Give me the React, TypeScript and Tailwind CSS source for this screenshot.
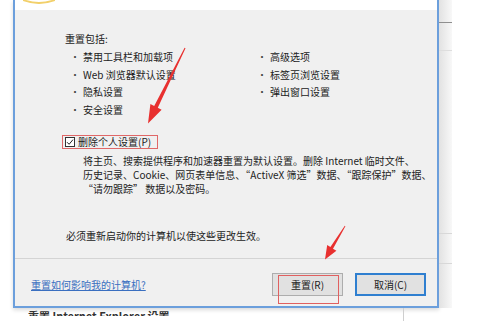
import React from "react";

const leftItems = ["禁用工具栏和加载项", "Web 浏览器默认设置", "隐私设置", "安全设置"];
const rightItems = ["高级选项", "标签页浏览设置", "弹出窗口设置"];

function Bullets({ items }: { items: string[] }) {
  return (
    <div className="flex flex-col">
      {items.map((t) => (
        <div key={t} className="flex h-[17.5px] items-center whitespace-nowrap">
          <span className="w-[13px] text-[#444]">•</span>
          <span>{t}</span>
        </div>
      ))}
    </div>
  );
}

function Checkbox() {
  return (
    <span className="flex h-[10px] w-[10px] items-center justify-center border border-[#333] bg-white">
      <svg width="8" height="8" viewBox="0 0 8 8">
        <path d="M1 4.2 L3.1 6.3 L7 1.6" fill="none" stroke="#222" strokeWidth="1" />
      </svg>
    </span>
  );
}

function Dialog() {
  return (
    <div className="flex h-[308px] w-[426px] shrink-0 flex-col border-x-2 border-b-2 border-[#6c9fdc] bg-[#f0f0f0] shadow-[0_2px_4px_rgba(0,0,0,0.15)]">
      <div className="h-[10px] bg-white pl-[8px]">
        <svg width="32" height="4" viewBox="0 0 32 4">
          <path d="M0 0 Q16 6 32 0" fill="none" stroke="#f2d06a" strokeWidth="2" />
        </svg>
      </div>

      <div className="mt-[22px] pl-[50px] leading-[14px]">重置包括:</div>

      <div className="mt-[2px] flex pl-[55px]">
        <div className="w-[187px]">
          <Bullets items={leftItems} />
        </div>
        <Bullets items={rightItems} />
      </div>

      <div className="ml-[47px] mt-[17px] flex h-[14px] w-fit items-center border border-[#e06868] pl-[2px] pr-[6px]">
        <Checkbox />
        <span className="ml-[3px] leading-[12px]">删除个人设置(P)</span>
      </div>

      <div className="mt-[5px] whitespace-nowrap pl-[68px] leading-[14px]">
        将主页、搜索提供程序和加速器重置为默认设置。删除 Internet 临时文件、
        <br />
        历史记录、Cookie、网页表单信息、“ActiveX 筛选”数据、“跟踪保护”数据、
        <br />
        “请勿跟踪” 数据以及密码。
      </div>

      <div className="mt-[33px] pl-[51px] leading-[14px]">必须重新启动你的计算机以使这些更改生效。</div>

      <div className="mt-auto flex h-[48px] items-start border-t border-[#d4d4d4] pl-[16px] pr-[11px] pt-[14px]">
        <span className="mt-[5px] leading-[14px] text-[#3a6fc0] underline">重置如何影响我的计算机?</span>
        <div className="ml-auto flex gap-[12px]">
          <button className="flex h-[23px] w-[71px] items-center justify-center border border-[#adadad] bg-[#e1e1e1] text-[10px]">
            重置(R)
          </button>
          <button className="flex h-[23px] w-[71px] items-center justify-center border-2 border-[#2f7fd0] bg-[#e1e1e1] text-[10px]">
            取消(C)
          </button>
        </div>
      </div>
    </div>
  );
}

function RightStrip() {
  return (
    <div className="flex h-[308px] w-[13px] shrink-0 flex-col bg-gradient-to-r from-[#e2e2e2] to-[#f8f8f8]">
      <div className="mt-[22px] h-px bg-[#8f8f8f]" />
      <div className="mt-[27px] h-px bg-[#dedede]" />
      <div className="mt-[182px] h-px bg-[#d8d8d8]" />
      <div className="mt-[29px] h-px bg-[#d8d8d8]" />
    </div>
  );
}

function BottomStrip() {
  return (
    <div className="flex h-[13px]">
      <div className="ml-[28px] mt-[1px] h-[7px] w-[375px] overflow-hidden">
        <div className="text-[11px] font-bold leading-[14px] text-[#333]">重置 Internet Explorer 设置</div>
      </div>
      <div className="h-full w-px bg-[#cfcfcf]" />
    </div>
  );
}

function Annotations() {
  return (
    <svg className="pointer-events-none absolute inset-0" width="503" height="321" viewBox="0 0 503 321">
      <rect x="278.5" y="275.5" width="60" height="28" fill="none" stroke="#e06060" strokeWidth="1" />
      <polygon
        points="185.5,48.2 157.8,107.8 161.6,109.8 148,123.5 150.4,104 154.2,106 184.6,47.8"
        fill="#e8302f"
      />
      <polygon
        points="345.4,226.2 333,248.7 336.4,250.8 325,259.5 327.2,245 330.4,247.1 344.8,225.8"
        fill="#e8302f"
      />
    </svg>
  );
}

export default function App() {
  return (
    <div className="relative h-[321px] w-[503px] overflow-hidden bg-white font-['Noto_Sans_CJK_SC','Noto_Sans',sans-serif] text-[10px] text-[#222]">
      <div className="flex h-[308px]">
        <div className="w-[13px] shrink-0" />
        <Dialog />
        <RightStrip />
      </div>
      <BottomStrip />
      <Annotations />
    </div>
  );
}
